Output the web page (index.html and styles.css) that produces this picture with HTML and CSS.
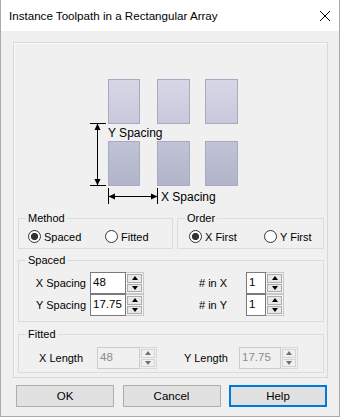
FILE: index.html
```html
<!DOCTYPE html>
<html>
<head>
<meta charset="utf-8">
<link rel="stylesheet" href="styles.css">
</head>
<body>
<div class="window">
  <div class="titlebar">
    <span class="title">Instance Toolpath in a Rectangular Array</span>
    <svg class="close" width="10" height="10" viewBox="0 0 10 10"><path d="M0 0L10 10M10 0L0 10" stroke="#000" stroke-width="1" fill="none"/></svg>
  </div>
  <div class="content">
    <div class="panel">
      <svg class="diagram" width="313" height="169" viewBox="0 0 313 169">
        <defs>
          <linearGradient id="cell" gradientUnits="userSpaceOnUse" x1="0" y1="36" x2="0" y2="142">
            <stop offset="0" stop-color="#d6d8e7"/>
            <stop offset="1" stop-color="#b2b5ca"/>
          </linearGradient>
        </defs>
        <g fill="url(#cell)" stroke="#a7aac1" stroke-width="1">
          <rect x="94.5" y="36.5" width="31" height="44"/>
          <rect x="143.5" y="36.5" width="32" height="44"/>
          <rect x="191.5" y="36.5" width="32" height="44"/>
          <rect x="94.5" y="98.5" width="31" height="44"/>
          <rect x="143.5" y="98.5" width="32" height="44"/>
          <rect x="191.5" y="98.5" width="32" height="44"/>
        </g>
        <g stroke="#000" stroke-width="1" fill="none">
          <path d="M83.5 81V142M76 80.5H92M76 142.5H92"/>
          <path d="M95 153.5H143M94.5 145V161M143.5 145V161"/>
        </g>
        <g fill="#000">
          <polygon points="83.5,80.5 80.5,87 86.5,87"/>
          <polygon points="83.5,142.5 80.5,136 86.5,136"/>
          <polygon points="94.5,153.5 101,150.5 101,156.5"/>
          <polygon points="143.5,153.5 137,150.5 137,156.5"/>
        </g>
        <text x="94" y="94" class="dtext">Y Spacing</text>
        <text x="147" y="158" class="dtext">X Spacing</text>
      </svg>

      <div class="group-row">
        <fieldset class="group method">
          <legend>Method</legend>
          <div class="radios">
            <span class="opt opt-a"><span class="radio checked"></span>Spaced</span>
            <span class="opt"><span class="radio"></span>Fitted</span>
          </div>
        </fieldset>
        <fieldset class="group order">
          <legend>Order</legend>
          <div class="radios">
            <span class="opt opt-b"><span class="radio checked"></span>X First</span>
            <span class="opt"><span class="radio"></span>Y First</span>
          </div>
        </fieldset>
      </div>

      <fieldset class="group spaced">
        <legend>Spaced</legend>
        <div class="spaced-grid">
          <div class="srow">
            <span class="lbl lbl-sp">X Spacing</span>
            <div class="spin sp-wide"><div class="field">48</div><div class="btns"><span class="b up"></span><span class="b down"></span></div></div>
            <span class="lbl lbl-n">#&nbsp;in&nbsp;X</span>
            <div class="spin sp-narrow"><div class="field">1</div><div class="btns"><span class="b up"></span><span class="b down"></span></div></div>
          </div>
          <div class="srow">
            <span class="lbl lbl-sp">Y Spacing</span>
            <div class="spin sp-wide"><div class="field">17.75</div><div class="btns"><span class="b up"></span><span class="b down"></span></div></div>
            <span class="lbl lbl-n">#&nbsp;in&nbsp;Y</span>
            <div class="spin sp-narrow"><div class="field">1</div><div class="btns"><span class="b up"></span><span class="b down"></span></div></div>
          </div>
        </div>
      </fieldset>

      <fieldset class="group fitted">
        <legend>Fitted</legend>
        <div class="frow">
          <span class="lbl lbl-xl">X Length</span>
          <div class="spin disabled sp-x"><div class="field">48</div><div class="btns"><span class="b up"></span><span class="b down"></span></div></div>
          <span class="lbl lbl-yl">Y Length</span>
          <div class="spin disabled sp-y"><div class="field">17.75</div><div class="btns"><span class="b up"></span><span class="b down"></span></div></div>
        </div>
      </fieldset>
    </div>

    <div class="buttons">
      <button class="btn">OK</button>
      <button class="btn">Cancel</button>
      <button class="btn default">Help</button>
    </div>
  </div>
</div>
</body>
</html>
```

FILE: styles.css
```css
html, body {
  margin: 0;
  padding: 0;
  background: #f0f0f0;
}

body {
  font-family: "Liberation Sans", Arial, sans-serif;
  font-size: 11px;
  color: #000;
}

.window {
  box-sizing: border-box;
  width: 340px;
  height: 417px;
  background: #f0f0f0;
  border-left: 1px solid #aaaaaa;
  border-right: 1px solid #aaaaaa;
  border-bottom: 1px solid #aaaaaa;
  overflow: hidden;
}

.titlebar {
  height: 31px;
  background: #fff;
  display: flex;
  align-items: center;
  padding-left: 8px;
}

.title {
  font-size: 11.6px;
  color: #000;
  white-space: nowrap;
}

.close {
  margin-left: auto;
  margin-right: 9px;
  display: block;
}

.content {
  padding: 11px 11px 0 12px;
}

.panel {
  box-sizing: border-box;
  width: 315px;
  height: 336px;
  border: 1px solid #d9d9d9;
  box-shadow: inset 1px 1px 0 #fcfcfc;
  padding: 0 3px 4px 4px;
}

.diagram {
  display: block;
  margin-left: -4px;
}

.dtext {
  font-family: "Liberation Sans", Arial, sans-serif;
  font-size: 12px;
  fill: #000;
}

.group {
  margin: 0;
  padding: 0;
  min-width: 0;
  border: 1px solid #dcdcdc;
  box-sizing: border-box;
}

.group legend {
  margin-left: 7px;
  padding: 0 2px;
  line-height: 13px;
  font-size: 11px;
}

.group-row {
  display: flex;
  gap: 4px;
}

.method {
  width: 155px;
}

.order {
  width: 147px;
}

.radios {
  display: flex;
  align-items: center;
  height: 23px;
}

.method .radios {
  padding-left: 9px;
}

.order .radios {
  padding-left: 11px;
}

.opt {
  display: flex;
  align-items: center;
  white-space: nowrap;
}

.opt-a {
  width: 77px;
}

.opt-b {
  width: 75px;
}

.radio {
  box-sizing: border-box;
  width: 13px;
  height: 13px;
  border: 1px solid #333;
  border-radius: 50%;
  background: #fff;
  margin-right: 3px;
  flex: none;
}

.radio.checked {
  background: radial-gradient(circle, #333 0, #333 3.3px, #fff 3.9px);
}

.spaced {
  width: 306px;
  margin-top: 5px;
}

.spaced-grid {
  padding: 5px 0 5px 0;
  display: flex;
  flex-direction: column;
}

.srow {
  display: flex;
  align-items: center;
  height: 22px;
}

.lbl {
  white-space: nowrap;
  flex: none;
}

.lbl-sp {
  width: 67px;
  text-align: right;
  margin-right: 4px;
}

.lbl-n {
  width: 28px;
  margin-left: 55px;
  margin-right: 19px;
}

.fitted {
  width: 306px;
  margin-top: 6px;
}

.frow {
  display: flex;
  align-items: center;
  height: 22px;
  padding: 6px 0 3px 0;
}

.lbl-xl {
  width: 43px;
  margin-left: 20px;
  margin-right: 15px;
}

.lbl-yl {
  width: 43px;
  margin-left: 27px;
  margin-right: 12px;
}

.spin {
  display: flex;
  height: 22px;
  flex: none;
}

.spin .field {
  box-sizing: border-box;
  height: 22px;
  border: 1px solid #7a7a7a;
  background: #fff;
  padding-left: 2px;
  line-height: 19px;
  font-size: 11.5px;
}

.sp-wide .field { width: 36px; }
.sp-narrow .field { width: 20px; }
.sp-x .field { width: 43px; }
.sp-y .field { width: 42px; }

.spin .btns {
  box-sizing: border-box;
  width: 18px;
  height: 22px;
  border: 1px solid #c8c8c8;
  border-left: none;
  padding: 1px;
  display: flex;
  flex-direction: column;
  gap: 1px;
  background: #f4f4f4;
}

.sp-x .btns, .sp-y .btns {
  width: 17px;
}

.spin .b {
  flex: 1;
  box-sizing: border-box;
  border: 1px solid #adadad;
  background: #e8e8e8;
  display: flex;
  align-items: center;
  justify-content: center;
}

.spin .b::after {
  content: "";
  width: 0;
  height: 0;
  border-left: 3.5px solid transparent;
  border-right: 3.5px solid transparent;
}

.spin .up::after {
  border-bottom: 4px solid #000;
}

.spin .down::after {
  border-top: 4px solid #000;
}

.spin.disabled .field {
  background: #f0f0f0;
  border-color: #cccccc;
  color: #8d8d8d;
}

.spin.disabled .btns {
  border-color: #d9d9d9;
  background: #f0f0f0;
}

.spin.disabled .b {
  border-color: #d4d4d4;
  background: #f0f0f0;
}

.spin.disabled .up::after {
  border-bottom-color: #707070;
}

.spin.disabled .down::after {
  border-top-color: #707070;
}

.buttons {
  display: flex;
  justify-content: space-between;
  width: 311px;
  margin: 7px 0 0 3px;
}

.btn {
  box-sizing: border-box;
  width: 98px;
  height: 22px;
  background: #e1e1e1;
  border: 1px solid #adadad;
  font-family: "Liberation Sans", Arial, sans-serif;
  font-size: 11.5px;
  color: #000;
  padding: 0;
  margin: 0;
}

.btn.default {
  border: 2px solid #0078d7;
}
```
